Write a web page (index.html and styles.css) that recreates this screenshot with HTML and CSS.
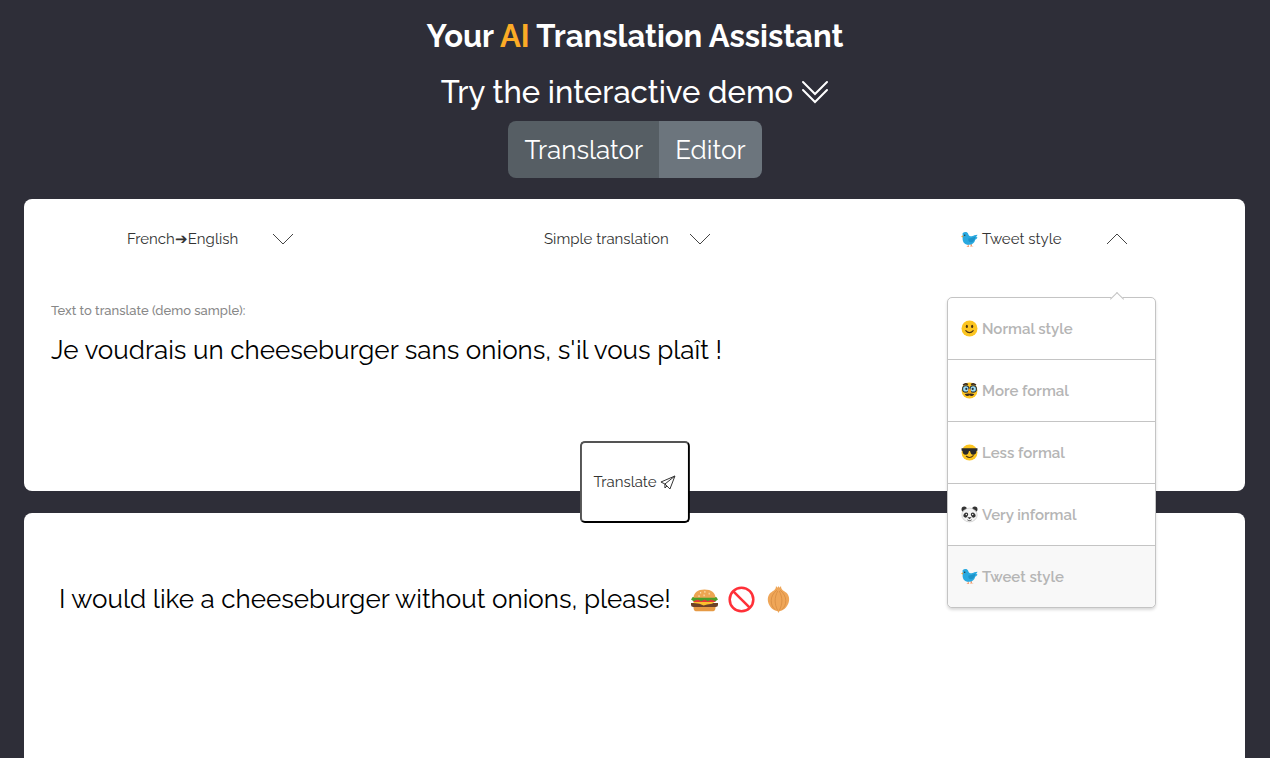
FILE: index.html
```html
<!DOCTYPE html>
<html lang="en">
<head>
    <meta charset="UTF-8">
    <meta name="viewport" content="width=device-width, initial-scale=1">
    <title>AI Translation Assistant</title>
    <link rel="stylesheet" href="styles.css">
</head>
<body>
    <!-- shared emoji drawings -->
    <svg class="sprites" aria-hidden="true">
        <symbol id="bird" viewBox="0 0 32 32">
            <path fill="#f39a6b" d="M18 24h2l1 4 3 1h-8l2-1zM12 24h2l1 6h-5l3-2z"/>
            <path fill="#29a9e0" d="M3 4c3-3 8-3 10 0 1 3 2 5 5 6 3 0 5-1 7-2l6-1c-1 2-1 3-3 4l3 1c-1 2-2 3-4 4-2 7-6 10-12 10C8 26 3 22 3 14z"/>
            <path fill="#1d93c9" d="M14 14c5 0 9-2 13-3-1 6-3 10-8 10-4 0-6-3-5-7z"/>
            <path fill="#f2a33a" d="M0 11l4-3v4z"/>
            <circle cx="7" cy="8" r="1.4" fill="#263238"/>
        </symbol>
        <symbol id="smile" viewBox="0 0 32 32">
            <circle cx="16" cy="16" r="15" fill="#fcc521"/>
            <ellipse cx="11" cy="12" rx="2" ry="3" fill="#4b3413"/>
            <ellipse cx="21" cy="12" rx="2" ry="3" fill="#4b3413"/>
            <path d="M9 20c4 5 10 5 14 0" fill="none" stroke="#4b3413" stroke-width="2" stroke-linecap="round"/>
        </symbol>
        <symbol id="disguise" viewBox="0 0 32 32">
            <circle cx="16" cy="16" r="15" fill="#fcc521"/>
            <path d="M4 6c3-3 6-3 9-1M28 6c-3-3-6-3-9-1" fill="none" stroke="#3b2b20" stroke-width="3"/>
            <circle cx="9" cy="13" r="6" fill="#9bdcf5" stroke="#29323a" stroke-width="2"/>
            <circle cx="23" cy="13" r="6" fill="#9bdcf5" stroke="#29323a" stroke-width="2"/>
            <circle cx="10" cy="13" r="2" fill="#29323a"/>
            <circle cx="22" cy="13" r="2" fill="#29323a"/>
            <ellipse cx="16" cy="17" rx="3" ry="5" fill="#f3a51d"/>
            <path fill="#3b2b20" d="M16 22c3-1 6 0 9 1-2 4-7 4-9 2-2 2-7 2-9-2 3-1 6-2 9-1z"/>
        </symbol>
        <symbol id="cool" viewBox="0 0 32 32">
            <circle cx="16" cy="16" r="15" fill="#fcc521"/>
            <path fill="#2b2b2b" d="M1 8h30v4l-2 1c0 5-2 7-6 7-4 0-5-3-6-7h-2c-1 4-2 7-6 7s-6-2-6-7l-2-1z"/>
            <path d="M10 23c4 3 9 3 13-1" fill="none" stroke="#4b3413" stroke-width="2" stroke-linecap="round"/>
        </symbol>
        <symbol id="panda" viewBox="0 0 32 32">
            <circle cx="6" cy="6" r="5" fill="#333"/>
            <circle cx="26" cy="6" r="5" fill="#333"/>
            <ellipse cx="16" cy="17" rx="14.5" ry="13" fill="#f4f4f4" stroke="#bbb"/>
            <ellipse cx="9" cy="17" rx="4" ry="5" fill="#333" transform="rotate(30 9 17)"/>
            <ellipse cx="23" cy="17" rx="4" ry="5" fill="#333" transform="rotate(-30 23 17)"/>
            <circle cx="10" cy="16" r="1.3" fill="#fff"/>
            <circle cx="22" cy="16" r="1.3" fill="#fff"/>
            <path fill="#333" d="M12 21h8l-4 4z"/>
            <path d="M12 26c2 2 6 2 8 0" fill="none" stroke="#333" stroke-width="1.5"/>
        </symbol>
        <symbol id="chevron" viewBox="0 0 20 12">
            <path d="M0 1l10 10L20 1" fill="none" stroke="currentColor"/>
        </symbol>
    </svg>

    <header class="hero">
        <h1>Your <span class="accent">AI</span> Translation Assistant</h1>
        <h2>Try the interactive demo
            <svg class="icon-down" viewBox="0 0 28 24" aria-hidden="true">
                <path d="M2 2l12 12L26 2M2 10l12 12L26 10" fill="none" stroke="currentColor" stroke-width="2" stroke-linecap="round"/>
            </svg>
        </h2>
        <div class="mode">
            <button type="button" class="active">Translator</button>
            <button type="button">Editor</button>
        </div>
    </header>

    <main>
        <section class="panel source">
            <div class="options">
                <div class="dropdown">
                    <select class="toggle" aria-label="Languages">
                        <option>French➔English</option>
                    </select>
                    <svg class="chevron" aria-hidden="true"><use href="#chevron"/></svg>
                </div>
                <div class="dropdown">
                    <select class="toggle" aria-label="Mode">
                        <option>Simple translation</option>
                    </select>
                    <svg class="chevron" aria-hidden="true"><use href="#chevron"/></svg>
                </div>
                <div class="dropdown open">
                    <button type="button" class="toggle" aria-expanded="true" aria-controls="styles">
                        <svg class="emoji" aria-hidden="true"><use href="#bird"/></svg>Tweet style
                    </button>
                    <svg class="chevron" aria-hidden="true"><use href="#chevron"/></svg>
                    <ul class="menu" id="styles">
                        <li><button type="button"><svg class="emoji" aria-hidden="true"><use href="#smile"/></svg>Normal style</button></li>
                        <li><button type="button"><svg class="emoji" aria-hidden="true"><use href="#disguise"/></svg>More formal</button></li>
                        <li><button type="button"><svg class="emoji" aria-hidden="true"><use href="#cool"/></svg>Less formal</button></li>
                        <li><button type="button"><svg class="emoji" aria-hidden="true"><use href="#panda"/></svg>Very informal</button></li>
                        <li class="selected"><button type="button"><svg class="emoji" aria-hidden="true"><use href="#bird"/></svg>Tweet style</button></li>
                    </ul>
                </div>
            </div>

            <div class="field">
                <label for="text">Text to translate (demo sample):</label>
                <textarea id="text" rows="3">Je voudrais un cheeseburger sans onions, s'il vous plaît !</textarea>
            </div>

            <button type="button" class="translate">Translate
                <svg viewBox="0 0 16 16" aria-hidden="true">
                    <path d="M15 2L1 8l4 2 5 5zM15 2L5 10v4l2-2" fill="none" stroke="currentColor" stroke-linejoin="round"/>
                </svg>
            </button>
        </section>

        <section class="panel result">
            <p>
                <span class="output">I would like a cheeseburger without onions, please!</span>
                <svg class="food" viewBox="0 0 32 32" role="img" aria-label="Hamburger">
                    <path fill="#e69a45" d="M3 23h26v3c0 3-2 4-4 4H7c-2 0-4-1-4-4z"/>
                    <path fill="#6d4127" d="M0 20h32v2c0 2-1 3-3 3H3c-2 0-3-1-3-3z"/>
                    <path fill="#fbc02d" d="M3 18h26l-4 3-6 1-4 1-5-2-7-1z"/>
                    <path fill="#e53935" d="M3 15h26v4H3z"/>
                    <path fill="#4c9f28" d="M2 13h28l2 3-3 2-5-2-4 2-4-2-4 2-4-2-5 2-3-2z"/>
                    <path fill="#eda552" d="M3 14C3 8 8 4 16 4s13 4 13 10z"/>
                    <path d="M11 8h1M16 7h1M21 9h1M15 11h1M9 12h1" stroke="#fff3d0" stroke-width="2"/>
                </svg>
                <svg class="food" viewBox="0 0 32 32" role="img" aria-label="Prohibited">
                    <path d="M6 6l20 20" stroke="#ff3038" stroke-width="3"/>
                    <circle cx="16" cy="16" r="14" fill="none" stroke="#ff3038" stroke-width="3"/>
                </svg>
                <svg class="food" viewBox="0 0 32 32" role="img" aria-label="Onion">
                    <path fill="#efa658" d="M13 0l2 2 1-2 1 2 2-2c0 4 2 5 5 7 8 5 5 18-4 22l-3 1-1 2-1-2-3-1C3 25 0 12 8 7c3-2 5-3 5-7z"/>
                    <path d="M14 5C5 12 6 23 12 28M18 5c9 7 8 18 2 23M15 6c-4 8-4 15 0 23M17 6c4 8 4 15 0 23" fill="none" stroke="#d88d43"/>
                </svg>
            </p>
        </section>
    </main>
</body>
</html>
```
FILE: styles.css
```css
* {
    box-sizing: border-box;
}

body {
    margin: 0;
    min-height: 100vh;
    display: flex;
    flex-direction: column;
    background-color: #2e2e38;
    color: #000;
    font-family: Raleway, Lato, "Open Sans", sans-serif;
}

button, select, textarea {
    font: inherit;
}

.sprites {
    display: none;
}

.hero {
    display: flex;
    flex-direction: column;
    align-items: center;
    padding-top: 16px;
    color: #fff;
}

h1, h2 {
    margin: 0;
    font-size: 31px;
    line-height: 40px;
}

h1 {
    font-weight: 700;
    margin-bottom: 16px;
}

h2 {
    display: flex;
    align-items: center;
    gap: 8px;
    font-weight: 500;
    margin-bottom: 9px;
}

.accent {
    color: #fbab26;
}

.icon-down {
    width: 28px;
    height: 24px;
}

.mode {
    display: flex;
    border-radius: 8px;
    overflow: hidden;
}

.mode button {
    height: 57px;
    padding: 0 16px;
    border: 0;
    background-color: #6c757d;
    color: #fff;
    font-size: 26px;
}

.mode .active {
    background-color: #565e64;
}

main {
    flex: 1;
    display: flex;
    flex-direction: column;
    gap: 22px;
    padding: 21px 25px 0 24px;
}

.panel {
    background-color: #fff;
    border-radius: 8px;
}

.source {
    position: relative;
    padding: 9px 0 16px;
}

.options {
    display: grid;
    grid-template-columns: repeat(3, 1fr);
    gap: 30px;
    justify-items: center;
}

.dropdown {
    position: relative;
    width: 209px;
}

.toggle {
    appearance: none;
    display: flex;
    align-items: center;
    width: 100%;
    height: 62px;
    padding: 0 14px;
    border: 0;
    background: none;
    color: #333;
    font-size: 15px;
    text-align: left;
}

.chevron {
    position: absolute;
    top: 25px;
    right: 29px;
    width: 20px;
    height: 12px;
    color: #444;
    pointer-events: none;
}

.open .chevron {
    transform: rotate(180deg);
}

.emoji {
    width: 17px;
    height: 17px;
    margin-right: 4px;
}

.menu {
    position: absolute;
    top: 89px;
    left: 0;
    z-index: 2;
    width: 100%;
    margin: 0;
    padding: 0;
    list-style: none;
    background-color: #fff;
    border: 1px solid #c4c4c4;
    border-radius: 5px;
    box-shadow: 0 2px 3px rgba(0, 0, 0, 0.15);
}

/* little arrow on top of the menu */
.menu::before {
    content: "";
    position: absolute;
    top: -4px;
    right: 33px;
    width: 9px;
    height: 9px;
    background-color: #fff;
    border: solid #c4c4c4;
    border-width: 1px 0 0 1px;
    transform: rotate(45deg);
}

.menu li + li {
    border-top: 1px solid #c4c4c4;
}

.menu button {
    display: flex;
    align-items: center;
    width: 100%;
    height: 61px;
    padding: 0 13px;
    border: 0;
    background: none;
    color: #b5b5b5;
    font-size: 15px;
    font-weight: 600;
}

.menu .selected {
    background-color: #f8f8f8;
    border-radius: 0 0 5px 5px;
}

.field {
    display: flex;
    flex-direction: column;
    gap: 12px;
    padding: 32px 27px 0;
}

.field label {
    color: #888;
    font-size: 13px;
    font-weight: 500;
    line-height: 18px;
}

.field textarea {
    width: 75%;
    padding: 0;
    border: 0;
    resize: none;
    outline: none;
    background: none;
    color: #000;
    font-size: 26px;
    line-height: 36px;
    height: 143px;
}

.translate {
    position: absolute;
    bottom: -32px;
    left: 50%;
    transform: translateX(-50%);
    display: flex;
    align-items: center;
    gap: 3px;
    height: 82px;
    padding: 0 12px;
    background-color: #fff;
    border: 2px outset #000;
    border-radius: 5px;
    color: #333;
    font-size: 15px;
}

.translate svg {
    width: 16px;
    height: 16px;
}

.result {
    flex: 1;
    padding: 66px 35px;
    border-radius: 8px 8px 0 0;
}

.result p {
    display: flex;
    align-items: center;
    gap: 10px;
    margin: 0;
    font-size: 26px;
    line-height: 40px;
}

.output {
    margin-right: 10px;
}

.food {
    width: 27px;
    height: 27px;
}
```
